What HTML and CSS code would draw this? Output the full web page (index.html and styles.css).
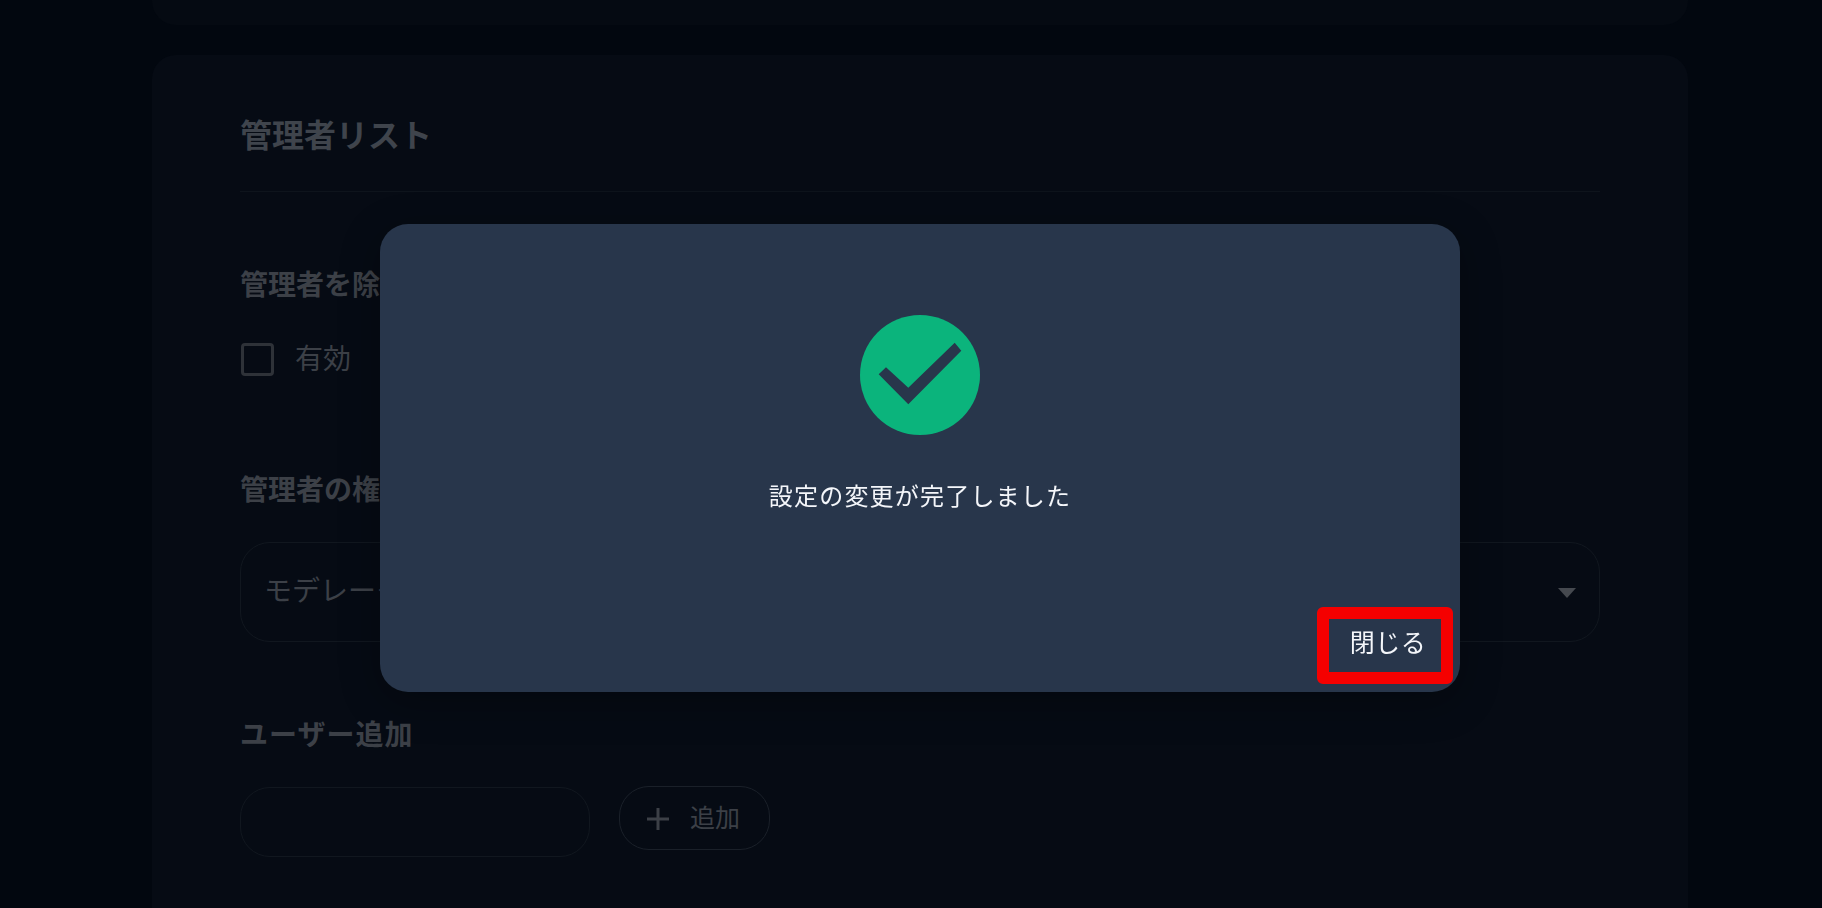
FILE: index.html
```html
<!DOCTYPE html>
<html lang="ja">
<head>
  <meta charset="UTF-8">
  <meta name="viewport" content="width=device-width, initial-scale=1.0">
  <title>管理者リスト</title>
  <link rel="stylesheet" href="styles.css">
</head>
<body>
  <div class="page">
    <div class="panel-top"></div>
    <section class="panel">
      <h2 class="panel-title">管理者リスト</h2>

      <h3 class="label label-first">管理者を除外</h3>
      <label class="check-row">
        <span class="checkbox"></span>
        <span class="check-text">有効</span>
      </label>

      <h3 class="label label-role">管理者の権限</h3>
      <div class="select">
        <span class="select-text">モデレーター</span>
        <span class="caret"></span>
      </div>

      <h3 class="label label-add">ユーザー追加</h3>
      <div class="add-row">
        <div class="input"></div>
        <div class="add-btn">
          <svg class="plus" viewBox="0 0 22 22" width="22" height="22">
            <path d="M11 0v22M0 11h22" stroke="currentColor" stroke-width="3" fill="none"/>
          </svg>
          <span class="add-text">追加</span>
        </div>
      </div>
    </section>
  </div>

  <!-- 完了モーダル -->
  <div class="overlay">
    <div class="modal">
      <svg class="done-icon" viewBox="0 0 120 120" width="120" height="120">
        <circle cx="60" cy="60" r="60" fill="#0bb47c"/>
        <polygon points="18.7,59.3 26,52.3 48.3,72.7 94.7,27.7 101.3,35.7 48.3,89.3" fill="#28364b"/>
      </svg>
      <p class="modal-text">設定の変更が完了しました</p>
      <button class="close-btn"><span class="close-text">閉じる</span></button>
    </div>
  </div>
</body>
</html>
```

FILE: styles.css
```css
* {
  box-sizing: border-box;
  padding: 0;
  margin: 0;
}
html, body {
  width: 100%;
  height: 908px;
  overflow: hidden;
}
body {
  background-color: #02070f;
  font-family: "Noto Sans CJK JP", "Noto Sans", sans-serif;
  color: #3c4047;
}
.page {
  width: 1536px;
  height: 908px;
  margin-left: 152px;
  overflow: hidden;
}
.panel-top {
  height: 25px;
  margin-bottom: 30px;
  background-color: #050a12;
  border-radius: 0 0 24px 24px;
}
.panel {
  height: 853px;
  padding: 56px 88px 0;
  background-color: #060b14;
  border-radius: 24px 24px 0 0;
}
.panel-title {
  height: 81px;
  font-size: 32px;
  line-height: 44px;
  font-weight: 700;
  color: #3f444c;
  border-bottom: 1px solid #0e141c;
}
.label {
  height: 40px;
  font-size: 28px;
  line-height: 40px;
  font-weight: 700;
  color: #3c4047;
}
.label-first { margin-top: 71px; }
.label-role { margin-top: 92px; }
.label-add {
  margin-top: 71px;
  letter-spacing: 1px;
}
.check-row {
  display: flex;
  align-items: center;
  gap: 21px;
  height: 33px;
  margin-top: 40px;
  font-size: 28px;
}
.checkbox {
  width: 33px;
  height: 33px;
  margin-left: 1px;
  border: 3px solid #2e3238;
  border-radius: 4px;
}
.check-text {
  margin-top: -5px;
}
.select {
  display: flex;
  justify-content: space-between;
  align-items: center;
  height: 100px;
  margin-top: 34px;
  padding: 0 23px 0 23px;
  font-size: 28px;
  border: 1px solid #11171f;
  border-radius: 30px;
}
.select-text {
  margin-top: -6px;
}
.caret {
  width: 0;
  height: 0;
  margin-top: 2px;
  border-left: 9px solid transparent;
  border-right: 9px solid transparent;
  border-top: 10px solid #45494f;
}
.add-row {
  display: flex;
  align-items: flex-start;
  gap: 29px;
  margin-top: 33px;
}
.input {
  width: 350px;
  height: 70px;
  margin-top: 1px;
  border: 1px solid #11171f;
  border-radius: 30px;
}
.add-btn {
  display: flex;
  align-items: center;
  gap: 21px;
  width: 151px;
  height: 64px;
  padding-left: 27px;
  font-size: 25px;
  border: 1px solid #1a2029;
  border-radius: 30px;
}
.plus {
  margin-top: 1px;
}
.add-text {
  margin-top: -5px;
}
.overlay {
  position: fixed;
  top: 0;
  left: 0;
  width: 100%;
  height: 100%;
  display: flex;
  justify-content: center;
  align-items: center;
  padding: 8px 0 0 18px;
}
.modal {
  display: flex;
  flex-direction: column;
  align-items: center;
  width: 1080px;
  height: 468px;
  padding: 91px 7px 8px;
  background-color: #28364b;
  border-radius: 28px;
  box-shadow: 0 10px 40px rgba(0, 0, 0, 0.3);
}
.done-icon {
  display: block;
  flex-shrink: 0;
}
.modal-text {
  margin-top: 42px;
  font-size: 24px;
  line-height: 36px;
  letter-spacing: 0.05em;
  color: #f4f6fa;
}
.close-btn {
  align-self: flex-end;
  width: 136px;
  height: 77px;
  margin-top: auto;
  font-family: inherit;
  font-size: 25px;
  letter-spacing: 0.02em;
  color: #f4f6fa;
  background-color: transparent;
  border: 12px solid #f50000;
  border-radius: 6px;
}
.close-text {
  position: relative;
  top: -5px;
  left: 3px;
}
```
